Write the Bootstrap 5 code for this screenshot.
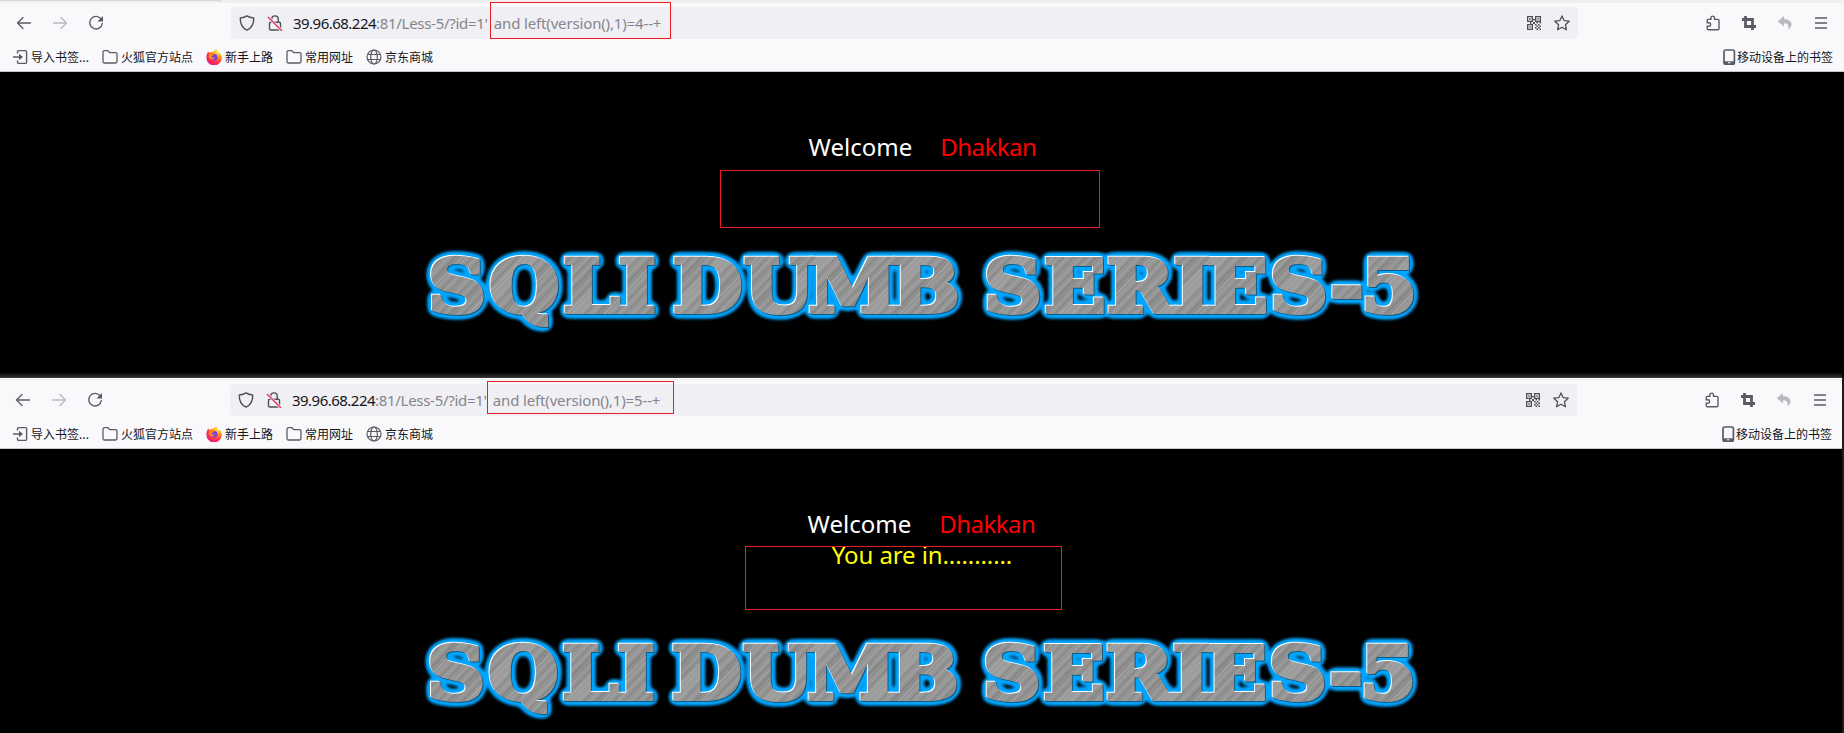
<!DOCTYPE html>
<html lang="zh-CN">
<head>
<meta charset="utf-8">
<title>Less-5</title>
<link href="https://cdn.jsdelivr.net/npm/bootstrap@5.3.0/dist/css/bootstrap.min.css" rel="stylesheet">
<style>
body{background:#000;font-family:"Noto Sans","Noto Sans CJK SC",sans-serif;height:733px;overflow:hidden}
.browser{height:377px}
.browser.second{height:356px;width:1842px}
.strip{height:3px;background:#efefef}
.strip i{display:block;height:1px;width:222px;background:#d8d8da}
.second .strip{background:linear-gradient(#333 0 1px,#fff 1px 2px,#ececee 2px)}
.second .strip i{display:none}
.shade{height:5px;margin-top:-5px;background:linear-gradient(#000,#2c2c2c)}
.chrome{background:#f9f9fb;border-bottom:1px solid #c8c8cc;height:69px;color:#5b5b66}
.tools{height:40px;padding:0 15px 0 16px}
.second .tools{padding-left:15px;padding-right:14px}
.tools svg,.marks svg{width:16px;height:16px;flex:none;display:block}
.nav-btns{gap:20px;width:215px}
.url{width:1346.5px;height:32px;background:#f0f0f4;border-radius:4px;padding:0 8px 0 8px;color:#85858c;font-size:15px;white-space:pre}
.url svg{color:#4f4f5a}
.url .txt{margin-left:10px;line-height:30px;margin-top:-1px}
.host{color:#15141a;letter-spacing:-.52px}
.path{letter-spacing:-.3px}
.query{letter-spacing:-.15px;margin-left:2.5px}
.actions{gap:20px}
.marks{height:28px;padding:0 11px 0 12px;font:12px/16px "Noto Sans CJK SC",sans-serif;color:#15141a}
.second .marks{padding-left:12px;padding-right:10px}
.marks svg{color:#5b5b66;margin-right:3px}
.marks .item{margin-right:13px;display:flex;align-items:center;white-space:nowrap}
.site{color:#fff;font-size:24px;line-height:31px;padding-top:59px;height:305px}
.second .site{height:284px}
.hello{gap:28px;height:31px;white-space:nowrap;padding-left:1px}
.reply{height:31px;color:#ff0;letter-spacing:-.1px;padding-left:2px}
.red{color:#f00;letter-spacing:-.5px}
.banner{display:block;width:1020px;height:110px;margin:42px 0 0 410px}
.second .banner{margin:52px 0 0 409px}
.banner text{font:bold 72.5px "DejaVu Serif",serif}
.mark-box{position:absolute;border:1px solid #ed1c24}
.m1{left:490px;top:2px;width:181px;height:37px}
.m2{left:720px;top:170px;width:380px;height:58px}
.m3{left:487px;top:381px;width:187px;height:33px}
.m4{left:745px;top:546px;width:317px;height:64px}
.edge{left:1842px;top:377px;width:2px;height:356px;background:#1c1c1c}
</style>
</head>
<body class="position-relative">
<svg width="0" height="0" class="position-absolute">
<defs>
<g id="back" fill="none" stroke="currentColor" stroke-width="1.3" stroke-linecap="round" stroke-linejoin="round"><path d="M14.500 8H1.500M7 2.500L1.500 8L7 13.500"/></g>
<g id="reload"><path d="M13.300 4.200A6.300 6.300 0 1 0 14.300 8.500" fill="none" stroke="currentColor" stroke-width="1.400" stroke-linecap="round"/><path d="M15 1v5.600H9.400z" fill="currentColor"/></g>
<path id="shield" d="M8 .9C6.300 2.200 4 2.800 1.300 3c-.3 5.400 1.700 9.700 6.700 12.100C13 12.700 15 8.400 14.700 3 12 2.800 9.700 2.200 8 .9z" fill="none" stroke="currentColor" stroke-width="1.400" stroke-linejoin="round"/>
<g id="lock" fill="none" stroke="currentColor" stroke-width="1.400"><rect x="2.500" y="7.300" width="11" height="7.700" rx="1.300"/><path d="M4.700 7V4.200a3.300 3.300 0 0 1 6.600 0V7"/><path d="M1 2l14 14" stroke="#f0f0f4" stroke-width="3"/><path d="M1 2l14 14" stroke="#e8375c"/></g>
<g id="qr" fill="currentColor"><path fill-rule="evenodd" d="M1 1h6v6H1zM2.300 2.300v3.400h3.400V2.300zM9 1h6v6H9zM10.300 2.300v3.400h3.400V2.300zM1 9h6v6H1zM2.300 10.300v3.400h3.400v-3.400z"/><path d="M3.300 3.300h1.400v1.400H3.300zM11.300 3.300h1.400v1.400h-1.400zM3.300 11.300h1.400v1.400H3.300zM7 4h2v1.300H7zM4 7h1.300v2H4zM7 7h2v2H7zM9 9h1.500v1.500H9zM12 9h1.500v1.500H12zM10.500 10.500H12V12h-1.500zM13.500 10.500H15V12h-1.500zM9 12h1.500v1.500H9zM12 12h1.500v1.500H12zM10.500 13.500H12V15h-1.500zM13.500 13.500H15V15h-1.500zM10.500 7H12v1.500h-1.500zM13.500 7H15v1.500h-1.500z"/></g>
<path id="star" d="M8 .9l2.100 4.700 5.100.6-3.800 3.500 1 5.100L8 12.300l-4.400 2.500 1-5.100L.8 6.200l5.100-.6z" fill="none" stroke="currentColor" stroke-width="1.300" stroke-linejoin="round"/>
<path id="puzzle" d="M2.200 7.800V5.600c0-.7.500-1.200 1.200-1.200h2.500V2.900a1.800 1.800 0 0 1 3.600 0v1.500h3.300c.7 0 1.200.5 1.200 1.200v8c0 .7-.5 1.200-1.200 1.200H3.400c-.7 0-1.200-.5-1.200-1.200v-2.300h1.700a1.750 1.750 0 0 0 0-3.500z" fill="none" stroke="currentColor" stroke-width="1.400"/>
<path id="crop" d="M4.500 1v10.500H15M1 4.500h10.500V15" fill="none" stroke="currentColor" stroke-width="2.800"/>
<path id="undo" d="M7 1L.8 6.300 7 11.500V8.300c3 0 5.200.8 4.500 6.400C17 9.500 14.500 4.200 7 4.200z" fill="#b9b9be"/>
<path id="menu" d="M2 3h12M2 8h12M2 13h12" stroke="currentColor" stroke-width="1.300"/>
<g id="import"><path d="M5.500 4.500V2.800c0-.7.500-1.200 1.200-1.200h6.700c.7 0 1.200.5 1.200 1.200v10.400c0 .7-.5 1.200-1.200 1.200H6.700c-.7 0-1.200-.5-1.200-1.200v-1.700M1 8h7" fill="none" stroke="currentColor" stroke-width="1.400"/><path d="M7 4.800L11 8l-4 3.200z" fill="currentColor"/></g>
<path id="folder" d="M1 12.600V3.200C1 2.300 1.600 1.700 2.500 1.700h3.300l2 2h5.900c.8 0 1.300.6 1.300 1.400v7.500c0 .9-.6 1.400-1.400 1.400H2.400C1.500 14 1 13.500 1 12.600z" fill="none" stroke="currentColor" stroke-width="1.300"/>
<g id="globe" fill="none" stroke="currentColor" stroke-width="1.200"><circle cx="8" cy="8" r="7"/><ellipse cx="8" cy="8" rx="3.300" ry="7"/><path d="M1.500 5.500h13M1.500 10.500h13"/></g>
<g id="phone" ><rect x="3" y="1" width="10.400" height="14.300" rx="1.500" fill="none" stroke="currentColor" stroke-width="1.700"/><path d="M3 12.300h10.400V15H3z" fill="currentColor"/><path d="M7 13.800h2.400" stroke="#fff"/></g>
<radialGradient id="fire" cx=".75" cy=".15" r="1"><stop offset="0" stop-color="#fff44f"/><stop offset=".35" stop-color="#ff980e"/><stop offset=".65" stop-color="#ff3647"/><stop offset="1" stop-color="#e31587"/></radialGradient>
<g id="fox"><path d="M10 0c1 1 1.600 2 1.800 3.200C14.500 4 16 6.500 15.800 9A7.700 7.700 0 0 1 .4 8.500C.3 6 1 4 2.400 2.400L3.200 4l2-.9c1.700-.4 3.800-.7 4.800-3.100z" fill="url(#fire)"/><circle cx="8.200" cy="8.200" r="3.300" fill="#7542e5"/><path d="M3 5c2-1 3.500-.3 4.800.8-.5 1-2 .8-2.300 1.700.5 1.500 2.500 1.300 3.500.6-.2 2.800-5.400 3.400-6.200-.1z" fill="#ff8a16"/></g>
<!-- brushed steel -->
<pattern id="steel" width="67" height="600" patternUnits="userSpaceOnUse" patternTransform="rotate(41)">
<rect width="67" height="600" fill="#959595"/>
<path d="M14 0v600M48 0v600" stroke="#8f8f8f" stroke-width="9"/>
<path d="M31 0v600" stroke="#9c9c9c" stroke-width="10"/>
<path d="M2 0v600M9 0v600M17.500 0v600M28 0v600M33 0v600M41 0v600M53 0v600M60 0v600" stroke="#a8a8a8" stroke-width=".8"/>
<path d="M5 0v600M12 0v600M21 0v600M36.500 0v600M45 0v600M57 0v600M64 0v600" stroke="#7c7c7c" stroke-width=".8"/>
<path d="M24.500 0v600M50 0v600" stroke="#b8b8b8" stroke-width=".7"/>
</pattern>
<filter id="glow" filterUnits="userSpaceOnUse" x="0" y="0" width="1020" height="110" color-interpolation-filters="sRGB">
<feGaussianBlur in="SourceAlpha" stdDeviation="3.200" result="b"/>
<feComponentTransfer in="b" result="grown"><feFuncA type="linear" slope="8" intercept="-.4"/></feComponentTransfer>
<feFlood flood-color="#00a5ff"/><feComposite in2="grown" operator="in" result="blue"/>
<feGaussianBlur in="blue" stdDeviation="1.800" result="halo"/>
<feOffset in="SourceAlpha" dx="-.7" dy="-.7" result="o1"/><feFlood flood-color="#fff"/><feComposite in2="o1" operator="in" result="light"/>
<feOffset in="SourceAlpha" dx=".9" dy=".9" result="o2"/><feFlood flood-color="#155a80"/><feComposite in2="o2" operator="in" result="dark"/>
<feMerge><feMergeNode in="halo"/><feMergeNode in="halo"/><feMergeNode in="dark"/><feMergeNode in="light"/><feMergeNode in="SourceGraphic"/></feMerge>
</filter>
</defs>
</svg>

<div class="browser">
  <div class="strip"><i></i></div>
  <div class="chrome">
    <div class="tools d-flex align-items-center">
      <div class="nav-btns d-flex">
        <svg><use href="#back"/></svg>
        <svg opacity=".4"><use href="#back" transform="matrix(-1 0 0 1 16 0)"/></svg>
        <svg><use href="#reload"/></svg>
      </div>
      <div class="url d-flex align-items-center">
        <svg><use href="#shield"/></svg><svg style="margin-left:12px"><use href="#lock"/></svg>
        <div class="txt me-auto"><span class="host">39.96.68.224</span><span class="path">:81/Less-5/?id=1'</span><span class="query"> and left(version(),1)=4--+</span></div>
        <svg class="me-1"><use href="#qr"/></svg><svg class="ms-2"><use href="#star"/></svg>
      </div>
      <div class="actions d-flex ms-auto">
        <svg><use href="#puzzle"/></svg><svg><use href="#crop"/></svg><svg><use href="#undo"/></svg><svg><use href="#menu"/></svg>
      </div>
    </div>
    <div class="marks d-flex align-items-center">
      <span class="item"><svg><use href="#import"/></svg>导入书签...</span>
      <span class="item"><svg><use href="#folder"/></svg>火狐官方站点</span>
      <span class="item"><svg><use href="#fox"/></svg>新手上路</span>
      <span class="item"><svg><use href="#folder"/></svg>常用网址</span>
      <span class="item"><svg><use href="#globe"/></svg>京东商城</span>
      <span class="item ms-auto me-0"><svg class="me-0"><use href="#phone"/></svg>移动设备上的书签</span>
    </div>
  </div>
  <div class="site">
    <div class="hello d-flex justify-content-center"><span>Welcome</span><span class="red">Dhakkan</span></div>
    <div class="reply"></div>
    <svg class="banner" viewBox="0 0 1020 110"><g filter="url(#glow)"><text y="77.500" transform="scale(1.11 1)" fill="url(#steel)" stroke="url(#steel)" stroke-width="4" x="16.200 71.500 138 187.600 220 236.800 301 359 434 491 517 571.500 628 688 717.500 774.500 829 857">SQLI DUMB SERIES-5</text></g></svg>
  </div>
</div>

<div class="browser second">
  <div class="shade"></div>
  <div class="strip"><i></i></div>
  <div class="chrome">
    <div class="tools d-flex align-items-center">
      <div class="nav-btns d-flex">
        <svg><use href="#back"/></svg>
        <svg opacity=".4"><use href="#back" transform="matrix(-1 0 0 1 16 0)"/></svg>
        <svg><use href="#reload"/></svg>
      </div>
      <div class="url d-flex align-items-center">
        <svg><use href="#shield"/></svg><svg style="margin-left:12px"><use href="#lock"/></svg>
        <div class="txt me-auto"><span class="host">39.96.68.224</span><span class="path">:81/Less-5/?id=1'</span><span class="query"> and left(version(),1)=5--+</span></div>
        <svg class="me-1"><use href="#qr"/></svg><svg class="ms-2"><use href="#star"/></svg>
      </div>
      <div class="actions d-flex ms-auto">
        <svg><use href="#puzzle"/></svg><svg><use href="#crop"/></svg><svg><use href="#undo"/></svg><svg><use href="#menu"/></svg>
      </div>
    </div>
    <div class="marks d-flex align-items-center">
      <span class="item"><svg><use href="#import"/></svg>导入书签...</span>
      <span class="item"><svg><use href="#folder"/></svg>火狐官方站点</span>
      <span class="item"><svg><use href="#fox"/></svg>新手上路</span>
      <span class="item"><svg><use href="#folder"/></svg>常用网址</span>
      <span class="item"><svg><use href="#globe"/></svg>京东商城</span>
      <span class="item ms-auto me-0"><svg class="me-0"><use href="#phone"/></svg>移动设备上的书签</span>
    </div>
  </div>
  <div class="site">
    <div class="hello d-flex justify-content-center"><span>Welcome</span><span class="red">Dhakkan</span></div>
    <div class="reply text-center">You are in...........</div>
    <svg class="banner" viewBox="0 0 1020 110"><g filter="url(#glow)"><text y="77.500" transform="scale(1.11 1)" fill="url(#steel)" stroke="url(#steel)" stroke-width="4" x="16.200 71.500 138 187.600 220 236.800 301 359 434 491 517 571.500 628 688 717.500 774.500 829 857">SQLI DUMB SERIES-5</text></g></svg>
  </div>
</div>

<div class="mark-box m1"></div>
<div class="mark-box m2"></div>
<div class="mark-box m3"></div>
<div class="mark-box m4"></div>
<div class="edge position-absolute"></div>
<script src="https://cdn.jsdelivr.net/npm/bootstrap@5.3.0/dist/js/bootstrap.bundle.min.js"></script>
</body>
</html>
